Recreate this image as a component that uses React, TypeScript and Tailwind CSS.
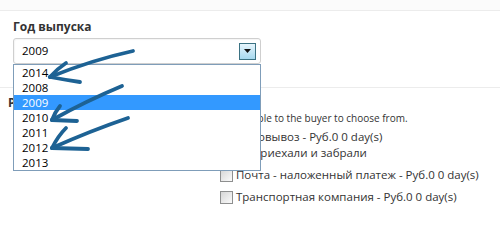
import { useState } from "react";

const years = ["2014", "2008", "2009", "2010", "2011", "2012", "2013"];

function Checkbox() {
	return (
		<span className="inline-block w-[13px] h-[13px] shrink-0 border border-[#8e8f8f] bg-gradient-to-br from-[#d6d6d6] to-[#fbfbfb]" />
	);
}

function Arrows() {
	return (
		<svg
			className="absolute inset-0 z-20 pointer-events-none"
			width="500"
			height="210"
			viewBox="0 0 500 210"
			fill="none"
			stroke="#1d6294"
			strokeWidth="3.8"
			strokeLinecap="round"
			strokeLinejoin="round"
		>
			<path d="M133 51 Q92 60 50 77" />
			<path d="M50 77 Q57 69 66 63" />
			<path d="M50 77 Q66 80 80 82" />
			<path d="M122 86 Q86 101 52 120" />
			<path d="M52 120 Q55 112 60 106" />
			<path d="M52 120 L77 121" />
			<path d="M128 118 Q90 131 52 148" />
			<path d="M52 148 Q58 136 66 128" />
			<path d="M52 148 L88 149" />
		</svg>
	);
}

export default function App() {
	const [selected] = useState("2009");

	return (
		<div className="relative w-[500px] h-[210px] overflow-hidden bg-white font-['Open_Sans',sans-serif] text-[#333]">
			<div className="h-[11px] bg-[#fbfbfb] border-b border-[#ececec]" />

			<div className="px-[13px] pt-[8px] pb-[23px] border-b border-[#ececec]">
				<div className="text-[12px] leading-[16px] font-bold">Год выпуска</div>
				<div className="relative mt-[3px] w-[248px]">
					<div className="h-[26px] flex items-center justify-between pl-[8px] pr-[4px] border border-[#cfcfcf] rounded-[3px] shadow-[inset_1px_1px_1px_rgba(0,0,0,0.04)] text-[11.5px] text-black">
						<span>{selected}</span>
						<span className="w-[17px] h-[17px] flex items-center justify-center border border-[#3b7283] bg-gradient-to-b from-[#e6f5fc] to-[#a6d9ef]">
							<svg width="7" height="4" viewBox="0 0 7 4">
								<path d="M0 0 H7 L3.5 4 Z" fill="#111" />
							</svg>
						</span>
					</div>
					<ul className="absolute left-0 top-full z-10 w-[248px] border border-[#7f9db9] bg-white text-[11.5px] text-black">
						{years.map((y) => (
							<li
								key={y}
								className={
									y === selected
										? "h-[15px] leading-[15px] pl-[8px] bg-[#3399ff] text-white"
										: "h-[15px] leading-[15px] pl-[8px]"
								}
							>
								{y}
							</li>
						))}
					</ul>
				</div>
			</div>

			<div className="pl-[8px] pt-[7px]">
				<div className="text-[12px] leading-[16px] font-bold">Postage options</div>
				<p className="pl-[8px] text-[10px] leading-[14px]">
					Here you select the delivery methods that are available to the buyer to choose from.
				</p>
			</div>

			<div className="ml-[220px] mt-[4px] text-[11.5px] text-[#333]">
				<div>
					<label className="flex items-center gap-[3px] leading-[16px]">
						<Checkbox />
						<span>Самовывоз - Руб.0 0 day(s)</span>
					</label>
					<div className="pl-[32px] leading-[15px]">Приехали и забрали</div>
				</div>
				<label className="mt-[7px] flex items-center gap-[3px] leading-[16px]">
					<Checkbox />
					<span>Почта - наложенный платеж - Руб.0 0 day(s)</span>
				</label>
				<label className="mt-[6px] flex items-center gap-[3px] leading-[16px]">
					<Checkbox />
					<span>Транспортная компания - Руб.0 0 day(s)</span>
				</label>
			</div>

			<Arrows />
		</div>
	);
}
